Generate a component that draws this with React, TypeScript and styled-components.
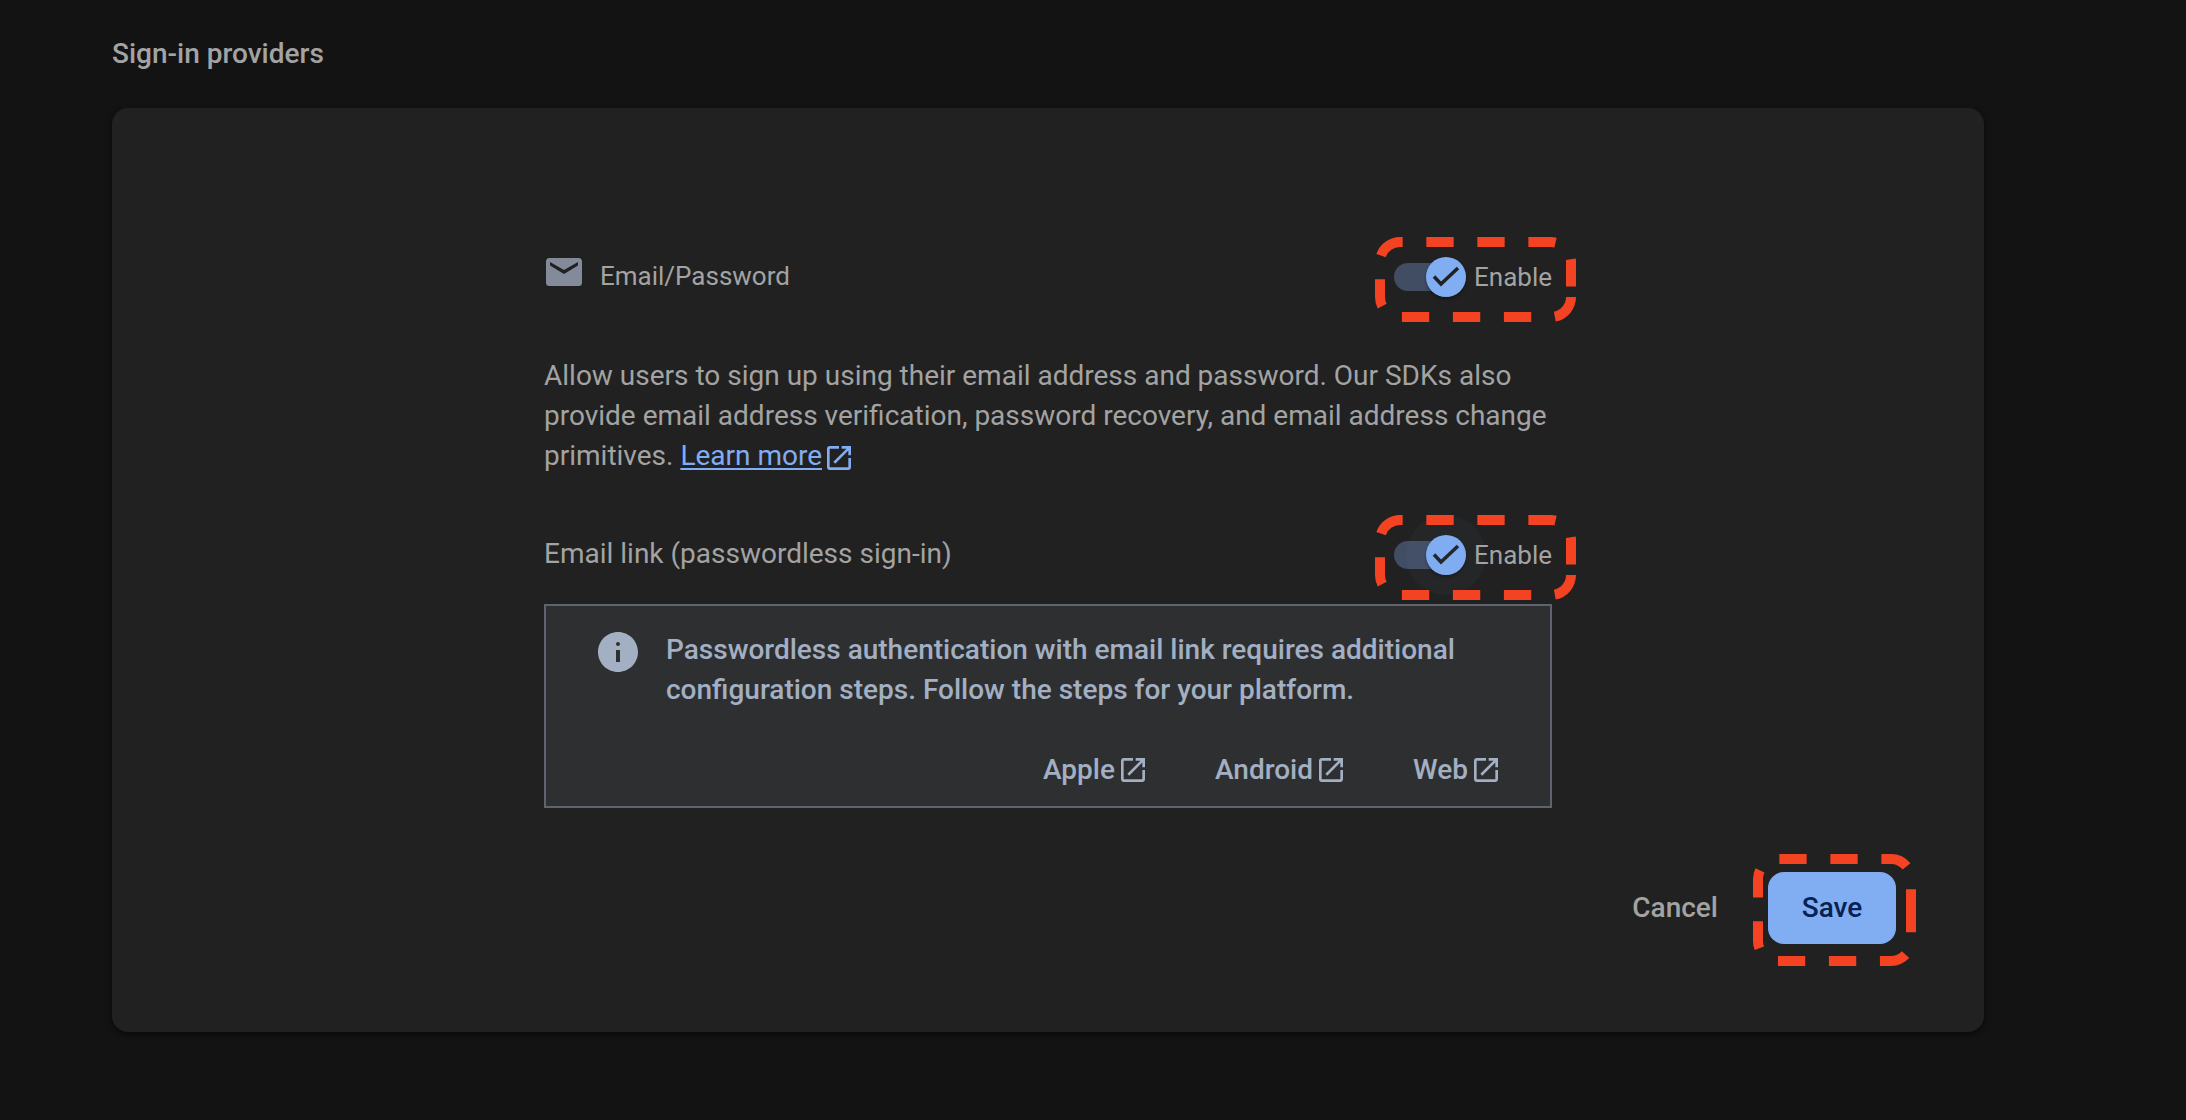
import React, { useId, useState } from "react";
import styled, { createGlobalStyle } from "styled-components";

const GlobalStyle = createGlobalStyle`
  *, *::before, *::after { box-sizing: border-box; }
  body {
    margin: 0;
    min-height: 100vh;
    background: #131313;
    color: #a3a3a3;
    font-family: Roboto, "Liberation Sans", sans-serif;
    font-size: 28px;
    line-height: 40px;
  }
`;

const Page = styled.main`
  padding: 34px 202px 88px 112px;
`;

const Title = styled.h1`
  margin: 0 0 34px;
  font-size: 28px;
  line-height: 40px;
  font-weight: 500;
`;

const Card = styled.section`
  padding: 128px 88px 88px;
  border-radius: 16px;
  background: #212121;
  box-shadow: 0 2px 6px rgba(0, 0, 0, 0.6);
`;

const Content = styled.div`
  max-width: 1008px;
  margin: 0 auto;
`;

const ProviderRow = styled.div`
  display: flex;
  align-items: center;
  justify-content: space-between;
  min-height: 82px;
`;

const ProviderName = styled.h2`
  display: flex;
  align-items: center;
  gap: 16px;
  margin: 0 0 2px;
  font-size: 26px;
  line-height: 40px;
  font-weight: 400;
`;

const MethodName = styled(ProviderName)`
  font-size: 28px;
`;

const Description = styled.p`
  margin: 38px 0;
`;

const InlineLink = styled.a`
  color: #81adf2;
  text-decoration: underline;
  text-decoration-thickness: 2px;
  text-underline-offset: 3px;

  svg {
    margin-left: 1px;
    vertical-align: -9px;
  }
`;

const SwitchLabel = styled.label`
  position: relative;
  display: flex;
  align-items: center;
  gap: 8px;
  font-size: 26px;
  cursor: pointer;
`;

const Track = styled.span`
  display: flex;
  align-items: center;
  width: 72px;
  height: 28px;
  border-radius: 14px;
  background: #414d63;
`;

const Knob = styled.span<{ $on: boolean; $focused?: boolean }>`
  position: relative;
  display: grid;
  place-items: center;
  width: 40px;
  height: 40px;
  margin-left: ${(p) => (p.$on ? "32px" : "0")};
  border-radius: 50%;
  background: #81adf2;
  color: #212121;
  box-shadow: 0 2px 3px rgba(0, 0, 0, 0.35);

  &::before {
    content: "";
    position: absolute;
    inset: -20px;
    border-radius: 50%;
    background: rgba(129, 173, 242, ${(p) => (p.$focused ? 0.04 : 0)});
  }
`;

const HiddenInput = styled.input`
  position: absolute;
  inset: 0;
  width: 100%;
  height: 100%;
  margin: 0;
  opacity: 0;
  cursor: pointer;
`;

const Notice = styled.aside`
  margin-top: 8px;
  padding: 22px 48px 0;
  border: 2px solid #5f636e;
  background: #2e2f31;
  color: #a3afc2;
  font-weight: 500;
`;

const NoticeBody = styled.div`
  display: flex;
  align-items: flex-start;
  gap: 24px;
  padding-right: 40px;

  svg {
    flex: none;
  }
`;

const NoticeText = styled.p`
  margin: 0;
  padding-top: 2px;
`;

const NoticeLinks = styled.nav`
  display: flex;
  justify-content: flex-end;
  gap: 66px;
  margin-top: 24px;
`;

const PlatformLink = styled.a`
  display: flex;
  align-items: center;
  gap: 2px;
  height: 72px;
  color: #a3afc2;
  text-decoration: none;
`;

const Actions = styled.div`
  display: flex;
  justify-content: flex-end;
  gap: 18px;
  margin-top: 64px;
`;

const ButtonSlot = styled.div`
  position: relative;
`;

const Button = styled.button<{ $primary?: boolean }>`
  min-width: 128px;
  height: 72px;
  padding: 0 32px;
  border: 0;
  border-radius: 16px;
  background: ${(p) => (p.$primary ? "#81adf2" : "transparent")};
  color: ${(p) => (p.$primary ? "#062152" : "#a3a3a3")};
  font: inherit;
  font-weight: 500;
  cursor: pointer;
`;

const HighlightSvg = styled.svg<{ $top: number; $left: number }>`
  position: absolute;
  top: ${(p) => p.$top}px;
  left: ${(p) => p.$left}px;
  pointer-events: none;
`;

type HighlightProps = { width: number; height: number; start: number; top: number; left: number };

// Rounded dashed outline; the dash pattern runs clockwise from `start` on the right side.
function Highlight({ width, height, start, top, left }: HighlightProps) {
  const r = 20;
  const x = width - 5;
  const y = height - 5;
  const d = `M${x} ${start}V${y - r}A${r} ${r} 0 0 1 ${x - r} ${y}H${5 + r}A${r} ${r} 0 0 1 5 ${y - r}V${5 + r}A${r} ${r} 0 0 1 ${5 + r} 5H${x - r}A${r} ${r} 0 0 1 ${x} ${5 + r}V${start}`;
  return (
    <HighlightSvg width={width} height={height} $top={top} $left={left} aria-hidden="true">
      <path d={d} fill="none" stroke="#f44323" strokeWidth="10" strokeDasharray="27.3 23.7" />
    </HighlightSvg>
  );
}

function MailIcon() {
  return (
    <svg width="40" height="40" viewBox="0 1 40 40" aria-hidden="true">
      <path
        fill="#838b9b"
        fillRule="evenodd"
        d="M5.500 3H34.500A3.500 3.500 0 0 1 38 6.500V27.500A3.500 3.500 0 0 1 34.500 31H5.500A3.500 3.500 0 0 1 2 27.500V6.500A3.500 3.500 0 0 1 5.500 3ZM6 7V10.500L20 19L34 10.500V7L20 15Z"
      />
    </svg>
  );
}

function InfoIcon() {
  return (
    <svg width="48" height="48" viewBox="0 0 24 24" fill="currentColor" aria-hidden="true">
      <path d="M12 2C6.480 2 2 6.480 2 12s4.480 10 10 10 10-4.480 10-10S17.520 2 12 2zm1 15h-2v-6h2v6zm-1-10a1 1 0 0 1 0 2a1 1 0 0 1 0-2z" />
    </svg>
  );
}

function OpenInNewIcon() {
  return (
    <svg width="32" height="32" viewBox="0 0 24 24" fill="currentColor" aria-hidden="true">
      <path d="M19 19H5V5h7V3H5c-1.110 0-2 .9-2 2v14c0 1.100.89 2 2 2h14c1.100 0 2-.9 2-2v-7h-2v7zM14 3v2h3.590l-9.830 9.830 1.410 1.410L19 6.410V10h2V3h-7z" />
    </svg>
  );
}

function Toggle({ focused }: { focused?: boolean }) {
  const [on, setOn] = useState(true);
  const id = useId();
  return (
    <SwitchLabel htmlFor={id}>
      <Track>
        <Knob $on={on} $focused={focused}>
          {on && (
            <svg width="28" height="22" viewBox="0 0 28 22" aria-hidden="true">
              <path d="M2 10.500L9 18L26 2" fill="none" stroke="currentColor" strokeWidth="3.500" />
            </svg>
          )}
        </Knob>
      </Track>
      Enable
      <HiddenInput id={id} type="checkbox" role="switch" checked={on} onChange={(e) => setOn(e.target.checked)} />
      <Highlight width={201} height={85} start={60} top={-20} left={-19} />
    </SwitchLabel>
  );
}

const platforms = ["Apple", "Android", "Web"];

export default function App() {
  return (
    <>
      <GlobalStyle />
      <Page>
        <Title>Sign-in providers</Title>
        <Card>
          <Content>
            <ProviderRow>
              <ProviderName>
                <MailIcon />
                Email/Password
              </ProviderName>
              <Toggle />
            </ProviderRow>
            <Description>
              Allow users to sign up using their email address and password. Our SDKs also provide email address
              verification, password recovery, and email address change primitives.{" "}
              <InlineLink href="#learn-more">
                Learn more
                <OpenInNewIcon />
              </InlineLink>
            </Description>
            <ProviderRow>
              <MethodName>Email link (passwordless sign-in)</MethodName>
              <Toggle focused />
            </ProviderRow>
            <Notice>
              <NoticeBody>
                <InfoIcon />
                <NoticeText>
                  Passwordless authentication with email link requires additional configuration steps. Follow the steps
                  for your platform.
                </NoticeText>
              </NoticeBody>
              <NoticeLinks>
                {platforms.map((name) => (
                  <PlatformLink key={name} href={`#${name.toLowerCase()}`}>
                    {name}
                    <OpenInNewIcon />
                  </PlatformLink>
                ))}
              </NoticeLinks>
            </Notice>
          </Content>
          <Actions>
            <Button type="button">Cancel</Button>
            <ButtonSlot>
              <Button type="submit" $primary>
                Save
              </Button>
              <Highlight width={163} height={112} start={51} top={-18} left={-15} />
            </ButtonSlot>
          </Actions>
        </Card>
      </Page>
    </>
  );
}
